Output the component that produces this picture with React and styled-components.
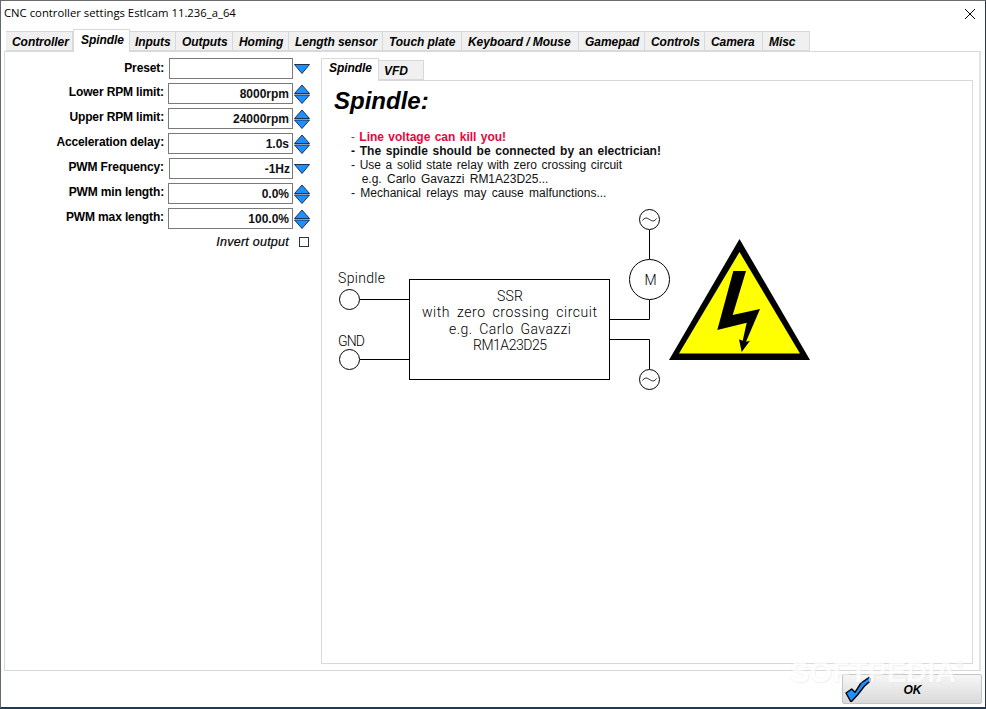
import React from "react";
import styled, { createGlobalStyle } from "styled-components";

const GlobalStyle = createGlobalStyle`
html, body {
	margin: 0;
	padding: 0;
	background: #fff;
	font-family: "Liberation Sans", Arial, sans-serif;
}
`

const mainTabs = [
	["Controller", 67], ["Spindle", 57], ["Inputs", 46], ["Outputs", 57], ["Homing", 56], ["Length sensor", 94],
	["Touch plate", 79], ["Keyboard / Mouse", 117], ["Gamepad", 66], ["Controls", 60], ["Camera", 58], ["Misc", 47],
]

const rows = [
	{ label: "Preset:", value: "", single: true },
	{ label: "Lower RPM limit:", value: "8000rpm" },
	{ label: "Upper RPM limit:", value: "24000rpm" },
	{ label: "Acceleration delay:", value: "1.0s" },
	{ label: "PWM Frequency:", value: "-1Hz", single: true },
	{ label: "PWM min length:", value: "0.0%" },
	{ label: "PWM max length:", value: "100.0%" },
]

function Arrows({ single }) {
	return (
		<ArrowSvg viewBox="0 0 16 20" width="16" height="20">
			{!single && <polygon points="8,1 15.5,9.5 0.5,9.5" fill="#1e8fff" stroke="#10233c" strokeWidth="0.9" />}
			<polygon
				points={single ? "0.5,5.500 15.5,5.500 8,14.500" : "0.5,11 15.5,11 8,19.5"}
				fill="#1e8fff"
				stroke="#10233c"
				strokeWidth="0.9"
			/>
		</ArrowSvg>
	)
}

function AcWave({ cx, cy }) {
	return (
		<g>
			<circle cx={cx} cy={cy} r="10" fill="#fff" stroke="#000" />
			<path
				d={`M${cx - 7} ${cy + 1}c2 -3 4 -3 7 -1s5 2 7 -1`}
				fill="none"
				stroke="#000"
				strokeWidth="0.9"
			/>
		</g>
	)
}

function Diagram() {
	return (
		<DiagramSvg viewBox="330 205 490 190" width="490" height="190">
			<g fill="none" stroke="#000" strokeWidth="1">
				<rect x="409.5" y="279.5" width="200" height="100" />
				<path d="M360 299.5H409M360 359.5H409" />
				<path d="M609 319.5H649.5V300M649.5 259V230" />
				<path d="M609 339.5H649.5V369" />
				<circle cx="349.5" cy="299.5" r="10" />
				<circle cx="349.5" cy="359.5" r="10" />
				<circle cx="649.5" cy="279.5" r="20" />
			</g>
			<AcWave cx={649.5} cy={219.5} />
			<AcWave cx={649.5} cy={379.5} />
			<DiagramText x="338" y="283" textLength="47">Spindle</DiagramText>
			<DiagramText x="338" y="346" textLength="27">GND</DiagramText>
			<DiagramText x="497" y="300.500" textLength="26">SSR</DiagramText>
			<DiagramText x="422" y="317" textLength="175">with zero crossing circuit</DiagramText>
			<DiagramText x="449" y="333.500" textLength="122">e.g. Carlo Gavazzi</DiagramText>
			<DiagramText x="473" y="350" textLength="74">RM1A23D25</DiagramText>
			<DiagramText x="644.5" y="285">M</DiagramText>
			<polygon points="739.5,239 810,360 669,360" fill="#000" />
			<polygon points="739.5,252 800,353.5 679,353.5" fill="#ffff00" />
			<polygon
				points="733.3,271 746,271 732.7,315 760,309 746,341.7 750,340.7 741.7,352 739,339.3 742.7,340.7 746.7,322.7 717.3,330"
				fill="#000"
			/>
		</DiagramSvg>
	)
}

export default function App() {
	return (
		<Window>
			<GlobalStyle />
			<TitleBar>
				<Title>CNC controller settings Estlcam 11.236_a_64</Title>
				<CloseIcon viewBox="0 0 10 10" width="10" height="10">
					<path d="M0 0L10 10M10 0L0 10" stroke="#000" strokeWidth="1" />
				</CloseIcon>
			</TitleBar>
			<TabBar>
				{mainTabs.map(([name, width]) => (
					<Tab key={name} $active={name === "Spindle"} $width={width}>{name}</Tab>
				))}
			</TabBar>
			<Panel>
				<FormColumn>
					{rows.map((r) => (
						<Row key={r.label}>
							<Label $top={r.label === "Preset:"}>{r.label}</Label>
							<Field $single={r.single}>{r.value}</Field>
							<Arrows single={r.single} />
						</Row>
					))}
					<CheckRow>
						<CheckLabel>Invert output</CheckLabel>
						<CheckBox />
					</CheckRow>
				</FormColumn>
				<RightColumn>
					<SubTabBar>
						<SubTab $active>Spindle</SubTab>
						<SubTab>VFD</SubTab>
					</SubTabBar>
					<SubPanel>
						<Heading>Spindle:</Heading>
						<Notes>
							<Note $color="#e8063c" $spacing={1}>- <b>Line voltage can kill you!</b></Note>
							<Note $spacing={1.4}><b>- The spindle should be connected by an electrician!</b></Note>
							<Note $spacing={1.3}>- Use a solid state relay with zero crossing circuit</Note>
							<Note>&nbsp; e.g. Carlo Gavazzi RM1A23D25...</Note>
							<Note>- Mechanical relays may cause malfunctions...</Note>
						</Notes>
						<Diagram />
					</SubPanel>
				</RightColumn>
			</Panel>
			<Footer>
				<OkButton>
					<CheckSvg viewBox="0 0 26 26" width="26" height="26">
						<polygon
							points="1,17 6.700,13 10,16.300 16,7 24.300,1.300 26,4.300 19.300,10.300 12.700,18.700 6,26"
							fill="#1e8fff"
							stroke="#000"
							strokeWidth="1.400"
							strokeLinejoin="round"
						/>
					</CheckSvg>
					<OkText>OK</OkText>
				</OkButton>
			</Footer>
			<Watermark>SOFTPEDIA<small>®</small></Watermark>
		</Window>
	)
}

const Window = styled.div`
position: relative;
box-sizing: border-box;
width: 986px;
height: 709px;
display: flex;
flex-direction: column;
background: #fff;
border-top: 1px solid #6b6b6b;
border-left: 1px solid #5f6a72;
border-right: 1px solid #24394d;
border-bottom: 2px solid #24394d;
overflow: hidden;
`
const TitleBar = styled.div`
height: 28px;
flex: none;
display: flex;
align-items: flex-start;
justify-content: space-between;
padding: 4px 10px 0 3px;
box-sizing: border-box;
`
const Title = styled.div`
font-family: "Open Sans", sans-serif;
font-size: 11.3px;
line-height: 15px;
color: #000;
`
const CloseIcon = styled.svg`
margin-top: 4px;
display: block;
`
const TabBar = styled.div`
flex: none;
display: flex;
align-items: flex-end;
height: 22px;
padding-left: 5px;
position: relative;
z-index: 1;
`
const Tab = styled.div`
box-sizing: border-box;
width: ${(p) => p.$width}px;
height: ${(p) => (p.$active ? "23px" : "20px")};
margin-bottom: ${(p) => (p.$active ? "-1px" : "0")};
padding: ${(p) => (p.$active ? "0 0 3px 7px" : "2px 0 0 6px")};
background: ${(p) => (p.$active ? "#fff" : "#f0f0f0")};
border: 1px solid #d9d9d9;
border-bottom: ${(p) => (p.$active ? "none" : "1px solid #d9d9d9")};
border-left: ${(p) => (p.$active ? "1px solid #d9d9d9" : "none")};
display: flex;
align-items: center;
font-size: 12px;
font-weight: bold;
font-style: italic;
letter-spacing: -0.05px;
color: #000;
white-space: nowrap;
${(p) => p.$active && "& + div { padding-left: 5px; }"}
`
const Panel = styled.div`
box-sizing: border-box;
width: 977px;
height: 620px;
margin-left: 3px;
flex: none;
display: flex;
background: #fff;
border: 1px solid #d9d9d9;
border-right: 2px solid #e4e4e4;
`
const FormColumn = styled.div`
width: 316px;
flex: none;
padding-top: 4px;
display: flex;
flex-direction: column;
`
const Row = styled.div`
display: flex;
align-items: center;
height: 25px;
`
const Label = styled.div`
width: 159px;
flex: none;
text-align: right;
font-size: 12px;
letter-spacing: -0.13px;
font-weight: bold;
color: #000;
position: relative;
top: ${(p) => (p.$top ? "-1px" : "-2px")};
`
const Field = styled.div`
box-sizing: border-box;
width: ${(p) => (p.$single ? "124px" : "125px")};
height: 21px;
margin-left: ${(p) => (p.$single ? "5px" : "4px")};
border: 1px solid #7a7a7a;
background: #fff;
padding-right: ${(p) => (p.$single ? "2px" : "3px")};
text-align: right;
font-size: 12px;
font-weight: bold;
line-height: 20px;
color: #111;
`
const ArrowSvg = styled.svg`
display: block;
flex: none;
margin-left: 1px;
`
const CheckRow = styled.div`
display: flex;
align-items: center;
justify-content: flex-end;
height: 22px;
padding-right: 12px;
`
const CheckLabel = styled.div`
font-size: 12.5px;
font-style: italic;
letter-spacing: 0.25px;
-webkit-text-stroke: 0.2px #000;
color: #000;
margin-right: 10px;
`
const CheckBox = styled.div`
box-sizing: border-box;
width: 10px;
height: 10px;
border: 1px solid #333;
background: #fff;
`
const RightColumn = styled.div`
flex: 1;
display: flex;
flex-direction: column;
padding-top: 6px;
`
const SubTabBar = styled.div`
display: flex;
align-items: flex-end;
height: 22px;
position: relative;
z-index: 1;
`
const SubTab = styled.div`
box-sizing: border-box;
width: ${(p) => (p.$active ? "58px" : "45px")};
height: ${(p) => (p.$active ? "23px" : "20px")};
margin-bottom: ${(p) => (p.$active ? "-1px" : "0")};
padding: ${(p) => (p.$active ? "0 0 4px 7px" : "1px 0 0 5px")};
background: ${(p) => (p.$active ? "#fff" : "#f0f0f0")};
border: 1px solid #d9d9d9;
border-bottom: ${(p) => (p.$active ? "none" : "1px solid #d9d9d9")};
border-left: ${(p) => (p.$active ? "1px solid #d9d9d9" : "none")};
display: flex;
align-items: center;
font-size: 12px;
font-weight: bold;
font-style: italic;
letter-spacing: -0.05px;
color: #000;
`
const SubPanel = styled.div`
box-sizing: border-box;
width: 652px;
height: 584px;
border: 1px solid #d9d9d9;
padding: 6px 0 0 12px;
background: #fff;
`
const Heading = styled.div`
font-size: 24px;
font-weight: bold;
font-style: italic;
line-height: 28px;
color: #000;
`
const Notes = styled.div`
margin: 15px 0 0 17px;
`
const Note = styled.div`
font-size: 12px;
line-height: 14px;
word-spacing: ${(p) => p.$spacing ?? 2}px;
color: ${(p) => p.$color || "#111"};
white-space: pre;
`
const DiagramSvg = styled.svg`
display: block;
margin: 5px 0 0 -4px;
`
const DiagramText = styled.text`
font-family: "Roboto", "DejaVu Sans", sans-serif;
font-size: 14px;
font-weight: 300;
word-spacing: 3px;
fill: #000;
`
const Footer = styled.div`
flex: 1;
display: flex;
justify-content: flex-end;
align-items: flex-start;
padding: 3px 3px 0 0;
`
const OkButton = styled.div`
box-sizing: border-box;
width: 140px;
height: 30px;
display: flex;
align-items: center;
border: 1px solid #c4c4c4;
border-radius: 2px;
background: linear-gradient(#f6f6f6, #dadada);
`
const CheckSvg = styled.svg`
display: block;
margin-left: 2px;
flex: none;
`
const OkText = styled.div`
flex: 1;
text-align: center;
margin-left: -27px;
padding-top: 1px;
font-size: 12px;
font-weight: bold;
font-style: italic;
color: #000;
`
const Watermark = styled.div`
position: absolute;
left: 789px;
top: 655px;
font-size: 29px;
font-weight: bold;
color: #fff;
text-shadow: 0 0 1px #e4e4e4, 1px 1px 1px #ebebeb;
opacity: 0.7;
pointer-events: none;
small {
	font-size: 9px;
	vertical-align: 14px;
}
`
